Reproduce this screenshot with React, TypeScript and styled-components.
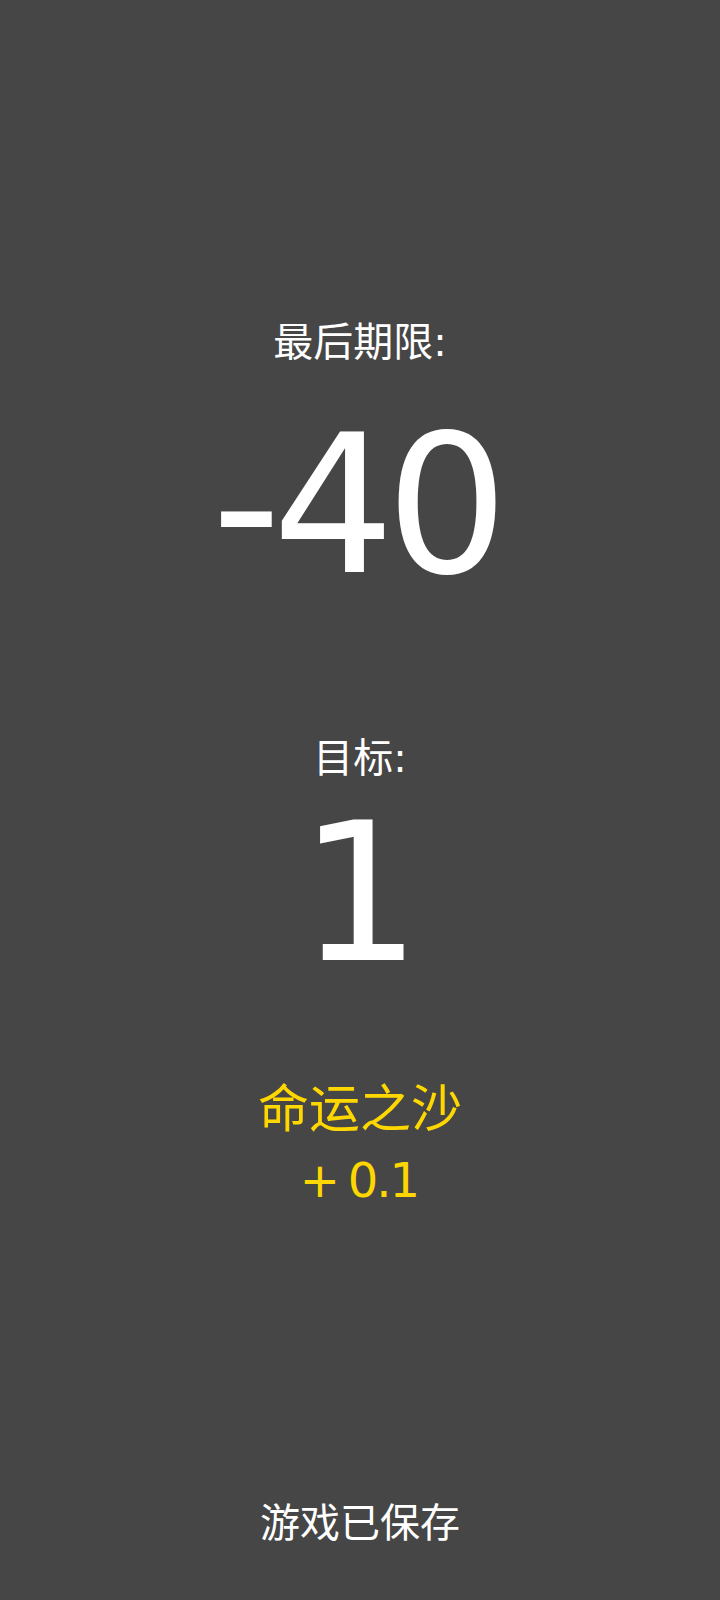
import styled, { createGlobalStyle } from 'styled-components';

const GlobalStyle = createGlobalStyle`
  html, body {
    margin: 0;
    padding: 0;
    background: #464646;
  }
`;

const Screen = styled.div`
  min-height: 1600px;
  box-sizing: border-box;
  display: flex;
  flex-direction: column;
  align-items: center;
  padding: 322px 0 57px;
  background: #464646;
  font-family: "DejaVu Sans", "Noto Sans CJK SC", sans-serif;
  color: #ffffff;
`;

const Label = styled.div<{ $gap?: number }>`
  font-size: 40px;
  line-height: 40px;
  margin-top: ${(p) => p.$gap ?? 0}px;
`;

// negative tracking leaves the last glyph hanging past the box, pad it back
const BigValue = styled.div<{ $gap: number }>`
  font-size: 192px;
  line-height: 192px;
  letter-spacing: -0.045em;
  padding-right: 0.045em;
  margin-top: ${(p) => p.$gap}px;
`;

const BonusTitle = styled.div<{ $gap: number }>`
  font-size: 51px;
  line-height: 51px;
  color: #ffd700;
  margin-top: ${(p) => p.$gap}px;
`;

const BonusValue = styled.div<{ $gap: number }>`
  font-size: 48px;
  line-height: 48px;
  letter-spacing: -0.04em;
  word-spacing: -0.08em;
  padding-right: 0.04em;
  color: #ffd700;
  margin-top: ${(p) => p.$gap}px;
`;

const Footer = styled.div`
  margin-top: auto;
  font-size: 40px;
  line-height: 40px;
`;

export default function App() {
  return (
    <>
      <GlobalStyle />
      <Screen>
        <Label>最后期限:</Label>
        <BigValue $gap={48}>-40</BigValue>
        <Label $gap={136}>目标:</Label>
        <BigValue $gap={20}>1</BigValue>
        <BonusTitle $gap={94}>命运之沙</BonusTitle>
        <BonusValue $gap={21}>+ 0.1</BonusValue>
        <Footer>游戏已保存</Footer>
      </Screen>
    </>
  );
}
